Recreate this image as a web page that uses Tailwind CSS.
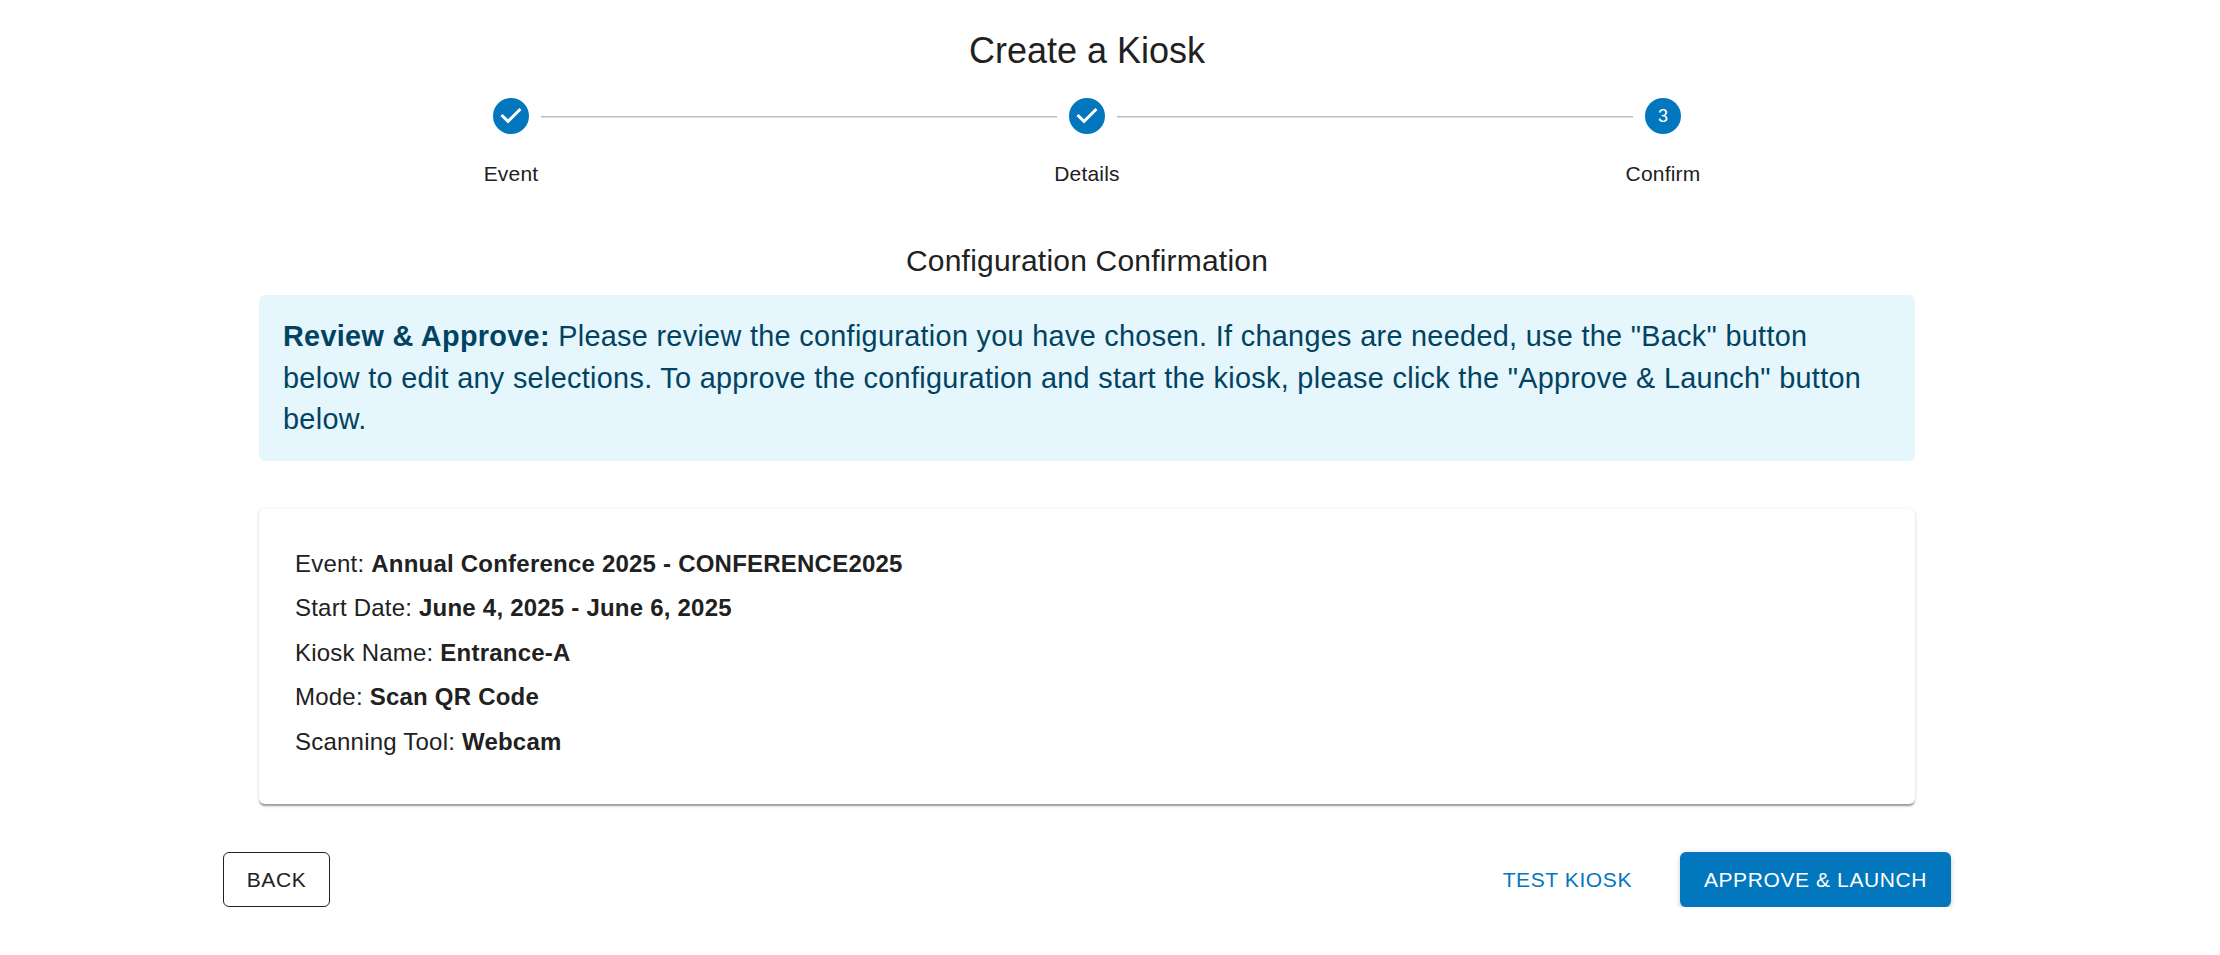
<!DOCTYPE html>
<html lang="en">
<head>
    <meta charset="UTF-8">
    <title>Create a Kiosk</title>
    <script src="https://cdn.jsdelivr.net/npm/@tailwindcss/browser@4"></script>
</head>
<body class="bg-white font-['Liberation_Sans',Arial,sans-serif] text-[#212121]">
    <div class="ml-[223px] w-[1728px] pt-[25px]">
        <h1 class="text-center text-[36px] leading-[52px] font-normal">Create a Kiosk</h1>

        <!-- stepper -->
        <div class="grid grid-cols-3 mt-[21px]">
            <div class="flex flex-col items-center">
                <div class="flex items-center gap-3 w-full">
                    <div class="flex-1"></div>
                    <svg viewBox="0 0 24 24" class="w-9 h-9 shrink-0 fill-[#0277bd]"><path d="M12 0a12 12 0 1 0 0 24 12 12 0 0 0 0-24zm-2 17l-5-5 1.4-1.4 3.6 3.6 7.6-7.6L19 8l-9 9z"/></svg>
                    <div class="flex-1 h-px mt-px bg-[#bdbdbd] shadow-[0_1px_0_#e0e0e0]"></div>
                </div>
                <span class="mt-[24px] text-[21px] leading-[32px] tracking-[0.2px]">Event</span>
            </div>
            <div class="flex flex-col items-center">
                <div class="flex items-center gap-3 w-full">
                    <div class="flex-1 h-px mt-px bg-[#bdbdbd] shadow-[0_1px_0_#e0e0e0]"></div>
                    <svg viewBox="0 0 24 24" class="w-9 h-9 shrink-0 fill-[#0277bd]"><path d="M12 0a12 12 0 1 0 0 24 12 12 0 0 0 0-24zm-2 17l-5-5 1.4-1.4 3.6 3.6 7.6-7.6L19 8l-9 9z"/></svg>
                    <div class="flex-1 h-px mt-px bg-[#bdbdbd] shadow-[0_1px_0_#e0e0e0]"></div>
                </div>
                <span class="mt-[24px] text-[21px] leading-[32px] tracking-[0.2px]">Details</span>
            </div>
            <div class="flex flex-col items-center">
                <div class="flex items-center gap-3 w-full">
                    <div class="flex-1 h-px mt-px bg-[#bdbdbd] shadow-[0_1px_0_#e0e0e0]"></div>
                    <div class="w-9 h-9 shrink-0 rounded-full bg-[#0277bd] text-white text-[18px] flex items-center justify-center">3</div>
                    <div class="flex-1"></div>
                </div>
                <span class="mt-[24px] text-[21px] leading-[32px] tracking-[0.2px]">Confirm</span>
            </div>
        </div>

        <div class="px-9">
            <h2 class="mt-[49px] text-center text-[30px] leading-[44px] font-normal tracking-[0.2px]">Configuration Confirmation</h2>

            <!-- info alert -->
            <div class="mt-[12px] h-[166px] rounded-[6px] bg-[#e5f6fd] pl-6 pr-10 pt-[21px] text-[#014361] text-[28.8px] leading-[41.5px] tracking-[0.32px]">
                <strong class="font-bold">Review &amp; Approve:</strong> Please review the configuration you have chosen. If changes are needed, use the "Back" button below to edit any selections. To approve the configuration and start the kiosk, please click the "Approve &amp; Launch" button below.
            </div>

            <!-- summary -->
            <div class="mt-[48px] h-[295px] rounded-[6px] bg-white px-9 pt-[37px] shadow-[0_3px_1.5px_-1.5px_rgba(0,0,0,0.2),0_1.5px_1.5px_0_rgba(0,0,0,0.14),0_1.5px_4.5px_0_rgba(0,0,0,0.12)] text-[24px] leading-[36px] tracking-[0.22px]">
                <p class="mb-[8.4px]">Event: <strong class="font-bold">Annual Conference 2025 - CONFERENCE2025</strong></p>
                <p class="mb-[8.4px]">Start Date: <strong class="font-bold">June 4, 2025 - June 6, 2025</strong></p>
                <p class="mb-[8.4px]">Kiosk Name: <strong class="font-bold">Entrance-A</strong></p>
                <p class="mb-[8.4px]">Mode: <strong class="font-bold">Scan QR Code</strong></p>
                <p>Scanning Tool: <strong class="font-bold">Webcam</strong></p>
            </div>
        </div>

        <!-- actions -->
        <div class="mt-[48px] flex items-center justify-between text-[21px] leading-[36px] tracking-[0.6px]">
            <button class="h-[55px] w-[107px] rounded-[6px] border border-[#212121] text-[#212121]">BACK</button>
            <div class="flex items-center gap-[36px]">
                <button class="h-[55px] px-3 rounded-[6px] text-[#0277bd]">TEST KIOSK</button>
                <button class="h-[55px] w-[271px] rounded-[6px] bg-[#0277bd] text-white shadow-[0_4.5px_1.5px_-3px_rgba(0,0,0,0.2),0_3px_3px_0_rgba(0,0,0,0.14),0_1.5px_7.5px_0_rgba(0,0,0,0.12)]">APPROVE &amp; LAUNCH</button>
            </div>
        </div>
    </div>
</body>
</html>
